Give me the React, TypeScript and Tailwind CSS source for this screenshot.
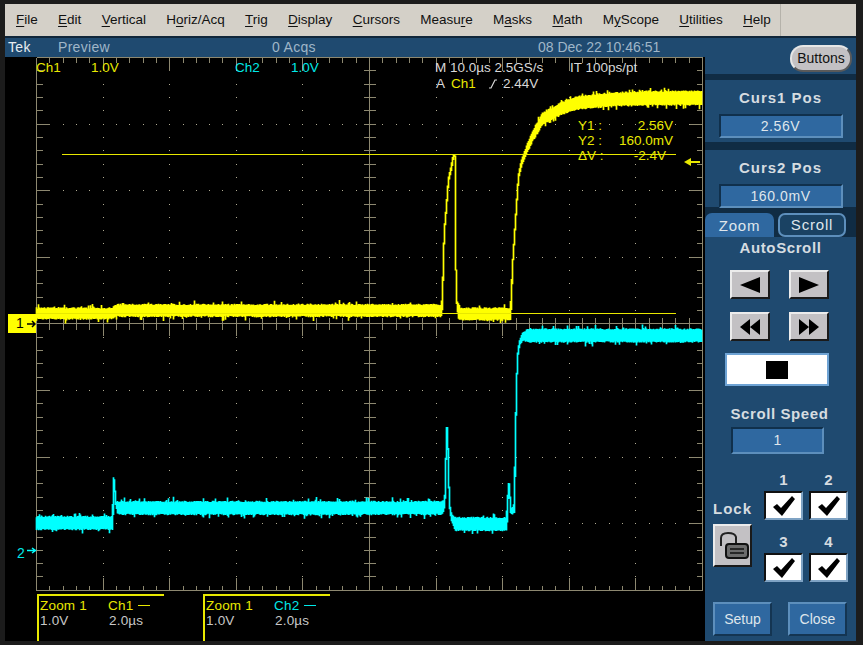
import React from 'react';

const menus: [string, number][] = [
  ['File', 0], ['Edit', 0], ['Vertical', 0], ['Horiz/Acq', 1], ['Trig', 0], ['Display', 0], ['Cursors', 0],
  ['Measure', 5], ['Masks', 1], ['Math', 0], ['MyScope', 1], ['Utilities', 0], ['Help', 0],
];

type Pt = [number, number, number];

const yellowPts: Pt[] = [
  [36, 313.5, 5.5], [113, 313.5, 5.5], [117, 310.5, 6], [442, 310.5, 6], [443, 303, 1], [444, 257, 1], [445, 230, 1],
  [447, 207, 1.2], [449, 180, 1.5], [452, 167, 2], [454, 156, 1], [455.5, 156, 0.6], [456, 240, 0.5], [457, 300, 0.5],
  [459, 314, 6], [511, 314, 6], [512, 300, 0.7], [513, 267, 0.8], [515, 237, 0.9], [517, 207, 1], [519, 177, 1.5],
  [522, 163, 2.5], [527, 150, 3.5], [533, 137, 4], [543, 119, 5.5], [563, 108, 6], [577, 103, 6.5], [603, 100, 6.5],
  [650, 98, 7], [702, 98, 7],
];

const cyanPts: Pt[] = [
  [36, 523, 6.5], [113, 523, 6.5], [113.6, 510, 2], [114, 480, 0.8], [115, 480, 0.8], [116, 503, 1], [118, 508, 6.5],
  [443, 508, 6.5], [445, 505, 1.5], [446, 490, 1], [447, 428, 1], [448, 428, 1], [449, 470, 1], [450, 505, 1], [452, 518, 3],
  [456, 524, 6.5], [507, 524, 6.5], [508, 512, 1.5], [509, 484, 0.8], [510, 484, 0.8], [511, 512, 2], [515, 508, 5],
  [516, 440, 0.8], [517, 390, 0.8], [518, 357, 1], [520, 343, 2], [523, 337, 4], [528, 335.5, 6.5], [702, 335.5, 6.5],
];

function makeRng(seed: number) {
  let s = seed;
  return () => {
    s = (s * 1664525 + 1013904223) % 4294967296;
    return s / 4294967296;
  };
}

function centerAt(pts: Pt[], x: number) {
  for (let i = 0; i < pts.length - 1; i++) {
    const a = pts[i];
    const b = pts[i + 1];
    if (x >= a[0] && x <= b[0]) {
      const t = (x - a[0]) / (b[0] - a[0] || 1);
      return [a[1] + (b[1] - a[1]) * t, a[2] + (b[2] - a[2]) * t];
    }
  }
  const last = pts[pts.length - 1];
  return [last[1], last[2]];
}

// one vertical run per pixel, so the trace keeps its noisy envelope
function tracePath(pts: Pt[], seed: number) {
  const rnd = makeRng(seed);
  let d = '';
  for (let x = 36.5; x < 702; x += 1) {
    const [c0, h0] = centerAt(pts, x);
    const [c1] = centerAt(pts, Math.min(x + 1, 702));
    const noise = h0 > 3 ? 1 : 0;
    const upSpike = rnd() > 0.86 ? rnd() * 4 : 0;
    const downSpike = rnd() > 0.86 ? rnd() * 4 : 0;
    const top = Math.min(c0, c1) - h0 - (rnd() * 1.6 - 0.8) * noise - upSpike * noise;
    const bottom = Math.max(c0, c1) + h0 + (rnd() * 1.6 - 0.8) * noise + downSpike * noise;
    d += `M${x} ${top.toFixed(1)}V${bottom.toFixed(1)}`;
  }
  return d;
}

const yellowPath = tracePath(yellowPts, 7);
const cyanPath = tracePath(cyanPts, 31);

const left = 36.5;
const right = 702.5;
const top = 57.5;
const bottom = 590.5;
const cx = 369.5;
const cy = 323.5;
const div = 66.6;
const sub = div / 5;

function Graticule() {
  const lines: React.ReactNode[] = [];
  const stroke = '#8d8870';
  const l = (x1: number, y1: number, x2: number, y2: number, k: string) => (
    <line key={k} x1={x1} y1={y1} x2={x2} y2={y2} stroke={stroke} strokeWidth="1" />
  );
  lines.push(l(left, top, right, top, 'bt'), l(left, bottom, right, bottom, 'bb'), l(left, top, left, bottom, 'bl'), l(right, top, right, bottom, 'br'));
  lines.push(l(left, cy, right, cy, 'ch'), l(cx, top, cx, bottom, 'cv'));
  for (let i = 0; i <= 50; i++) {
    const x = left + i * sub;
    const major = i % 5 === 0;
    lines.push(l(x, top, x, top + (major ? 13 : 5), `tt${i}`));
    lines.push(l(x, bottom, x, bottom - (major ? 13 : 5), `tb${i}`));
    lines.push(l(x, cy - 6, x, cy + (major ? 12 : 6), `tc${i}`));
  }
  for (let i = 0; i <= 40; i++) {
    const y = top + i * sub;
    const major = i % 5 === 0;
    lines.push(l(left, y, left + (major ? 13 : 6), y, `tl${i}`));
    lines.push(l(right, y, right - (major ? 13 : 6), y, `tr${i}`));
    lines.push(l(cx - 6, y, cx + 6, y, `tm${i}`));
  }
  const dots: React.ReactNode[] = [];
  for (let i = 1; i < 10; i++) {
    for (let j = 1; j < 40; j++) {
      dots.push(<rect key={`a${i}-${j}`} x={left + i * div - 0.5} y={top + j * sub - 0.5} width="1" height="1" fill="#b0ab92" />);
    }
  }
  for (let j = 1; j < 8; j++) {
    for (let i = 1; i < 50; i++) {
      dots.push(<rect key={`b${i}-${j}`} x={left + i * sub - 0.5} y={top + j * div - 0.5} width="1" height="1" fill="#b0ab92" />);
    }
  }
  return (
    <g shapeRendering="crispEdges">
      {dots}
      {lines}
    </g>
  );
}

function ScopeCanvas() {
  return (
    <svg viewBox="5 57 698 536" className="block h-[536px] w-[698px]">
      <Graticule />
      <path d={yellowPath} stroke="#ffff00" strokeWidth="1.7" fill="none" />
      <path d={cyanPath} stroke="#00ffff" strokeWidth="1.7" fill="none" />
      <line x1="62" y1="154.5" x2="676" y2="154.5" stroke="#e8e800" strokeWidth="1" />
      <line x1="36" y1="313.5" x2="676" y2="313.5" stroke="#e8e800" strokeWidth="1" />
      <path d="M684 162l7-4v3h9v2h-9v3z" fill="#e8e800" />
      <path d="M27 550.500h8m-3-2.500l3.500 2.500l-3.500 2.500" stroke="#00ffff" strokeWidth="1.500" fill="none" />
    </svg>
  );
}

function Readout({ name, color, lead }: { name: string; color: string; lead: string }) {
  return (
    <div className="flex w-[127px] flex-col border-l-2 border-t-2 border-[#e8e800] pl-[1px] text-[13.5px] leading-[15px] tracking-[0.2px]">
      <div className="flex h-[17px] items-end">
        <span className="w-[68px] text-[#e8e800]">Zoom 1</span>
        <span className={color}>{name}</span>
        <span className={`ml-[5px] mb-[7px] h-[1px] w-[12px] ${lead}`} />
      </div>
      <div className="flex h-[15px] text-[#c8c8c8]">
        <span className="w-[69px]">1.0V</span>
        <span>2.0µs</span>
      </div>
    </div>
  );
}

function ValueBox({ value }: { value: string }) {
  return (
    <div className="flex h-[24px] w-[124px] items-center justify-center border-2 border-b-[#5d8fbc] border-l-[#10304c] border-r-[#5d8fbc] border-t-[#10304c] bg-[#2f68a0] text-[14px] tracking-[0.6px] text-[#dfe6ec]">
      {value}
    </div>
  );
}

function CursorPanel({ title, value, height }: { title: string; value: string; height: string }) {
  return (
    <div className={`flex flex-col items-center bg-[#1f4a70] ${height}`}>
      <div className="mt-[9px] h-[18px] text-[15px] font-bold leading-[18px] tracking-[1px] text-[#d6dce0]">{title}</div>
      <div className="mt-[7px]">
        <ValueBox value={value} />
      </div>
    </div>
  );
}

const bevel = 'border-2 border-b-[#1a1a1a] border-l-[#ececec] border-r-[#1a1a1a] border-t-[#ececec] bg-[#c3c1c4]';

function ArrowButton({ d }: { d: string }) {
  return (
    <div className={`flex h-[29px] w-[40px] items-center justify-center ${bevel}`}>
      <svg viewBox="0 0 22 18" className="h-[18px] w-[22px]">
        <path d={d} fill="#000" />
      </svg>
    </div>
  );
}

function CheckBox() {
  return (
    <div className="flex h-[29px] w-[39px] items-center justify-center border-2 border-b-[#7fa3c4] border-l-[#111] border-r-[#7fa3c4] border-t-[#111] bg-white">
      <svg viewBox="0 0 24 20" className="h-[20px] w-[24px]">
        <path d="M1 11l4-3 4 4L20 0l3 3L10 20z" fill="#000" />
      </svg>
    </div>
  );
}

function ActionButton({ label }: { label: string }) {
  return (
    <div className="flex h-[34px] w-[59px] items-center justify-center border-2 border-b-[#143552] border-l-[#5d8fbc] border-r-[#143552] border-t-[#5d8fbc] bg-[#2f68a0] text-[14px] text-[#dfe6ec]">
      {label}
    </div>
  );
}

function SidePanel() {
  return (
    <div className="flex h-[603px] w-[151px] flex-col bg-[#102c44]">
      <div className="flex h-[36px] items-start justify-end bg-[#1f4a70] pr-[4px] pt-[7px]">
        <div className="flex h-[27px] w-[62px] items-center justify-center rounded-[13px] border-2 border-b-[#5a5a5a] border-l-[#e6e6e6] border-r-[#5a5a5a] border-t-[#e6e6e6] bg-[#c3c1c4] text-[14px] text-[#111]">
          Buttons
        </div>
      </div>
      <div className="mt-[6px]">
        <CursorPanel title="Curs1 Pos" value="2.56V" height="h-[62px]" />
      </div>
      <div className="mt-[8px]">
        <CursorPanel title="Curs2 Pos" value="160.0mV" height="h-[57px]" />
      </div>
      <div className="mt-[6px] flex h-[24px] items-end">
        <div className="flex h-[24px] w-[69px] items-center justify-center rounded-t-[7px] bg-[#2f68a0] pt-[2px] text-[15px] tracking-[0.8px] text-[#dfe6ec]">Zoom</div>
        <div className="ml-[4px] flex h-[24px] w-[68px] items-center justify-center rounded-[7px] border-2 border-[#5d8fbc] bg-[#1a4263] pt-[1px] text-[15px] tracking-[0.8px] text-[#dfe6ec]">Scroll</div>
      </div>
      <div className="flex h-[404px] flex-col bg-[#1f4a70]">
        <div className="mt-[2px] h-[18px] text-center text-[15px] font-bold leading-[18px] tracking-[0.6px] text-[#d6dce0]">AutoScroll</div>
        <div className="ml-[25px] mt-[13px] flex gap-[19px]">
          <ArrowButton d="M1 9L21 1v16z" />
          <ArrowButton d="M21 9L1 1v16z" />
        </div>
        <div className="ml-[25px] mt-[13px] flex gap-[19px]">
          <ArrowButton d="M1 9l10-8v16zM11 9l10-8v16z" />
          <ArrowButton d="M21 9L11 1v16zM11 9L1 1v16z" />
        </div>
        <div className="ml-[20px] mt-[12px] flex h-[33px] w-[104px] items-center justify-center border-2 border-[#6ea3d4] bg-white">
          <div className="h-[18px] w-[22px] bg-black" />
        </div>
        <div className="mt-[19px] h-[18px] pr-[2px] text-center text-[15px] font-bold leading-[18px] tracking-[0.6px] text-[#d6dce0]">Scroll Speed</div>
        <div className="ml-[26px] mt-[4px] flex h-[27px] w-[93px] items-center justify-center border-2 border-b-[#5d8fbc] border-l-[#10304c] border-r-[#5d8fbc] border-t-[#10304c] bg-[#2f68a0] text-[14px] text-[#dfe6ec]">1</div>
        <div className="ml-[8px] mt-[18px] flex">
          <div className="flex w-[39px] flex-col pt-[28px]">
            <div className="h-[18px] text-center text-[15px] font-bold leading-[18px] tracking-[1px] text-[#d6dce0]">Lock</div>
            <div className={`mt-[6px] flex h-[43px] w-[39px] items-center justify-center ${bevel}`}>
              <svg viewBox="0 0 32 32" className="h-[32px] w-[32px]">
                <path d="M4 16V8q0-5 7-5t8 4v7" stroke="#222" strokeWidth="2" fill="none" />
                <rect x="9" y="14" width="22" height="14" rx="3" fill="#6c6c6c" stroke="#111" strokeWidth="2" />
                <path d="M13 19h14M13 23h14" stroke="#111" strokeWidth="1.600" />
              </svg>
            </div>
          </div>
          <div className="ml-[12px] grid w-[84px] grid-cols-2 gap-x-[6px]">
            {['1', '2', '3', '4'].map((n) => (
              <div key={n} className={`flex flex-col items-center ${n === '3' || n === '4' ? 'mt-[14px]' : ''}`}>
                <div className="mb-[3px] h-[16px] text-[15px] font-bold leading-[16px] text-[#d6dce0]">{n}</div>
                <CheckBox />
              </div>
            ))}
          </div>
        </div>
        <div className="ml-[8px] mt-[20px] flex gap-[16px]">
          <ActionButton label="Setup" />
          <ActionButton label="Close" />
        </div>
      </div>
    </div>
  );
}

export default function App() {
  return (
    <div className="h-[645px] w-[863px] overflow-hidden bg-[#1c1c1c] pl-[5px] pt-[4px] font-['Liberation_Sans',Arial,sans-serif]">
      <div className="w-[851px]">
        <div className="flex h-[34px] items-center border-b-2 border-[#10263a] bg-[#d4d0c8] pl-[11px]">
          <div className="flex gap-[20.3px] text-[13.5px] text-[#111]">
            {menus.map(([name, u]) => (
              <span key={name}>
                {name.slice(0, u)}
                <span className="underline underline-offset-2">{name[u]}</span>
                {name.slice(u + 1)}
              </span>
            ))}
          </div>
          <div className="ml-[9px] h-[32px] w-[1px] bg-[#b5b2aa]" />
        </div>
        <div className="flex">
          <div className="w-[700px] bg-black">
            <div className="flex h-[19px] items-center bg-[#1f4a70] pl-[3px] text-[14px] leading-[19px] tracking-[0.3px]">
              <span className="w-[50px] text-[#e8edf0]">Tek</span>
              <span className="w-[214px] text-[#9fb6c8]">Preview</span>
              <span className="w-[266px] text-[#9fb6c8]">0 Acqs</span>
              <span className="tracking-[0px] text-[#9fb6c8]">08 Dec 22 10:46:51</span>
            </div>
            <div className="relative">
              <ScopeCanvas />
              <div className="absolute left-[31px] top-[3px] text-[13.500px] leading-[16px] text-[#e8e800]">Ch1</div>
              <div className="absolute left-[86px] top-[3px] text-[13.500px] leading-[16px] text-[#e8e800]">1.0V</div>
              <div className="absolute left-[230px] top-[3px] text-[13.500px] leading-[16px] text-[#00e8e8]">Ch2</div>
              <div className="absolute left-[286px] top-[3px] text-[13.500px] leading-[16px] text-[#00e8e8]">1.0V</div>
              <div className="absolute left-[430px] top-[3px] text-[13.500px] leading-[16px] text-[#d8d8d8]">M 10.0µs 2.5GS/s</div>
              <div className="absolute left-[565px] top-[3px] text-[13.500px] leading-[16px] text-[#d8d8d8]">IT 100ps/pt</div>
              <div className="absolute left-[431px] top-[19px] flex items-center text-[13.500px] leading-[16px] text-[#d8d8d8]">
                <span className="w-[15px]">A</span>
                <span className="w-[37px] text-[#e8e800]">Ch1</span>
                <svg viewBox="0 0 10 10" className="mr-[5px] h-[10px] w-[10px]">
                  <path d="M1 9h2l4-8h2" stroke="#d8d8d8" strokeWidth="1.200" fill="none" />
                </svg>
                <span>2.44V</span>
              </div>
              <div className="absolute left-[573px] top-[61px] w-[95px] text-[13.500px] leading-[15px] text-[#e8e800]">
                <div className="flex justify-between"><span>Y1 :</span><span>2.56V</span></div>
                <div className="flex justify-between"><span>Y2 :</span><span>160.0mV</span></div>
                <div className="flex justify-between pr-[7px]"><span>ΔV :</span><span>-2.4V</span></div>
              </div>
              <div className="absolute left-[3px] top-[257px] flex h-[19px] w-[28px] items-center justify-between bg-[#ffff00] pl-[8px] text-[14px] text-black">
                <span>1</span>
                <svg viewBox="0 0 10 8" className="h-[8px] w-[10px]">
                  <path d="M1 4h8M6 1l3 3-3 3" stroke="#000" strokeWidth="1.500" fill="none" />
                </svg>
              </div>
              <div className="absolute left-[12px] top-[486px] text-[14px] text-[#00e8e8]">2</div>
            </div>
            <div className="flex h-[48px] gap-[39px] pl-[32px] pt-[1px]">
              <Readout name="Ch1" color="text-[#e8e800]" lead="bg-[#e8e800]" />
              <Readout name="Ch2" color="text-[#00e8e8]" lead="bg-[#00e8e8]" />
            </div>
          </div>
          <SidePanel />
        </div>
      </div>
    </div>
  );
}
